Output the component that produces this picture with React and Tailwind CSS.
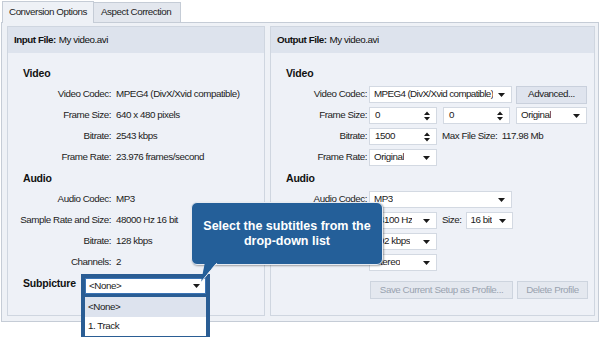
import React from "react";

const font = { fontFamily: '"Liberation Sans", Arial, sans-serif' };

const Arrow = () => (
  <svg width="7" height="4" viewBox="0 0 7 4" className="shrink-0">
    <path d="M0 0h7L3.5 4z" fill="#1a1a1a" />
  </svg>
);

const Spin = () => (
  <svg width="6" height="10" viewBox="0 0 6 10" className="shrink-0">
    <path d="M0 4h6L3 0.5z M0 6h6L3 9.5z" fill="#1a1a1a" />
  </svg>
);

const Select = ({ value, className = "" }) => (
  <div
    className={`h-[17px] bg-white border border-[#d3d9e2] flex items-center justify-between pl-[4px] pr-[6px] text-[#1a1a1a] ${className}`}
  >
    <span className="overflow-hidden">{value}</span>
    <Arrow />
  </div>
);

const SpinBox = ({ value, className = "" }) => (
  <div
    className={`h-[17px] bg-white border border-[#d3d9e2] flex items-center justify-between pl-[5px] pr-[6px] text-[#1a1a1a] ${className}`}
  >
    <span>{value}</span>
    <Spin />
  </div>
);

const InfoRow = ({ label, value }) => (
  <div className="flex items-center h-[21px]">
    <div className="w-[88px] shrink-0 flex justify-end text-[#222]">{label}</div>
    <div className="pl-[5px] text-[#222]">{value}</div>
  </div>
);

const FormRow = ({ label, children }) => (
  <div className="flex items-center h-[21px]">
    <div className="w-[82px] shrink-0 flex justify-end text-[#222] pr-[1px]">{label}</div>
    <div className="pl-[1px] flex items-center gap-[6px]">{children}</div>
  </div>
);

const Heading = ({ children }) => (
  <div className="h-[21px] flex items-center font-bold text-[#111] text-[10.5px] tracking-[-0.2px]">
    {children}
  </div>
);

const Panel = ({ title, width, children }) => (
  <div className="flex flex-col bg-[#eef1f7] border border-[#cfd6e0]" style={{ width }}>
    <div className="h-[26px] bg-[#dde3ed] flex items-center pl-[6px] text-[#111]">
      <span className="font-bold">{title}</span>
      <span className="ml-[3px]">My video.avi</span>
    </div>
    {children}
  </div>
);

export default function App() {
  return (
    <div
      className="relative w-[600px] h-[337px] bg-white overflow-hidden text-[9.8px] tracking-[-0.45px] whitespace-nowrap"
      style={font}
    >
      {/* tabs */}
      <div className="flex h-[22px] pl-[2px] items-end">
        <div className="h-[22px] w-[92px] bg-[#eef1f6] border border-b-0 border-[#c5ccd6] flex items-center pl-[6px] text-[#222] relative z-10 -mb-px">
          Conversion Options
        </div>
        <div className="h-[20px] w-[87px] bg-[#e3e7ee] border border-l-0 border-b-0 border-[#c5ccd6] flex items-center pl-[7px] text-[#222]">
          Aspect Correction
        </div>
      </div>

      {/* frame */}
      <div className="ml-[1px] w-[598px] h-[300px] bg-[#eef1f6] border border-[#c5ccd6] flex gap-[5px] pt-[3px] pb-[5px] pl-[5px]">
        <Panel title="Input File:" width={258}>
          <div className="pt-[10px] pl-[15px] flex flex-col">
            <Heading>Video</Heading>
            <InfoRow label="Video Codec:" value="MPEG4 (DivX/Xvid compatible)" />
            <InfoRow label="Frame Size:" value="640 x 480 pixels" />
            <InfoRow label="Bitrate:" value="2543 kbps" />
            <InfoRow label="Frame Rate:" value="23.976 frames/second" />
            <Heading>Audio</Heading>
            <InfoRow label="Audio Codec:" value="MP3" />
            <InfoRow label="Sample Rate and Size:" value="48000 Hz 16 bit" />
            <InfoRow label="Bitrate:" value="128 kbps" />
            <InfoRow label="Channels:" value="2" />
            <div className="flex items-center h-[22px]">
              <div className="w-[58px] font-bold text-[#111] text-[10.5px] tracking-[-0.2px]">Subpicture</div>
              <div className="relative w-[129px] border-[4px] border-b-0 border-[#2a5d94] bg-[#2a5d94]">
                <div className="h-[16px] bg-white border border-[#3b74b5] flex items-center justify-between pl-[3px] pr-[5px] text-[#1a1a1a]">
                  <span>&lt;None&gt;</span>
                  <Arrow />
                </div>
                <div className="absolute left-[-4px] right-[-4px] top-[16px] border-[4px] border-t-[3px] border-[#2a5d94] bg-white text-[#1a1a1a]">
                  <div className="h-[20px] bg-[#dde3ee] flex items-center pl-[3px]">&lt;None&gt;</div>
                  <div className="h-[19px] flex items-center pl-[3px]">1. Track</div>
                </div>
              </div>
            </div>
          </div>
        </Panel>

        <Panel title="Output File:" width={325}>
          <div className="pt-[10px] pl-[15px] flex flex-col">
            <Heading>Video</Heading>
            <FormRow label="Video Codec:">
              <Select value="MPEG4 (DivX/Xvid compatible)" className="w-[143px] pl-[3px] pr-[5px] tracking-[-0.6px]" />
              <div className="h-[18px] w-[71px] -ml-[2px] bg-[#dfe4ee] border border-[#c9d0dc] flex items-center justify-center text-[#1a1a1a]">
                Advanced...
              </div>
            </FormRow>
            <FormRow label="Frame Size:">
              <SpinBox value="0" className="w-[68px]" />
              <SpinBox value="0" className="w-[67px]" />
              <Select value="Original" className="w-[71px]" />
            </FormRow>
            <FormRow label="Bitrate:">
              <SpinBox value="1500" className="w-[68px]" />
              <span className="text-[#222] -ml-[1px]">Max File Size:&nbsp;&nbsp;117.98 Mb</span>
            </FormRow>
            <FormRow label="Frame Rate:">
              <Select value="Original" className="w-[68px]" />
            </FormRow>
            <Heading>Audio</Heading>
            <FormRow label="Audio Codec:">
              <Select value="MP3" className="w-[143px]" />
            </FormRow>
            <FormRow label="Sample Rate:">
              <Select value="44100 Hz" className="w-[68px]" />
              <span className="text-[#222] -ml-[1px]">Size:</span>
              <Select value="16 bit" className="w-[47px] -ml-[2px]" />
            </FormRow>
            <FormRow label="Bitrate:">
              <Select value="192 kbps" className="w-[68px]" />
            </FormRow>
            <FormRow label="Channels:">
              <Select value="Stereo" className="w-[68px]" />
            </FormRow>
            <div className="flex justify-end gap-[4px] pr-[6px] mt-[8px] text-[#9aa3b0]">
              <div className="h-[18px] w-[143px] bg-[#e4e8ef] border border-[#cdd4de] flex items-center justify-center">
                Save Current Setup as Profile...
              </div>
              <div className="h-[18px] w-[71px] bg-[#e4e8ef] border border-[#cdd4de] flex items-center justify-center">
                Delete Profile
              </div>
            </div>
          </div>
        </Panel>
      </div>

      {/* callout */}
      <div className="absolute left-[191px] top-[202px] w-[192px] h-[63px] rounded-[6px] bg-[#245f99] border border-[#e6ebf2] shadow-[1px_1px_2px_rgba(0,0,0,0.35)] flex items-center justify-center text-center text-white font-bold text-[12.5px] tracking-normal leading-[15px] z-20">
        Select the subtitles from the
        <br />
        drop-down list
      </div>
      <svg className="absolute left-[196px] top-[262px] z-30" width="26" height="22" viewBox="0 0 26 22">
        <path d="M9 0 L21 0 L5 20 Z" fill="#245f99" />
        <path d="M21 1 L5 20" stroke="#e6ebf2" strokeWidth="1" fill="none" />
      </svg>
    </div>
  );
}
